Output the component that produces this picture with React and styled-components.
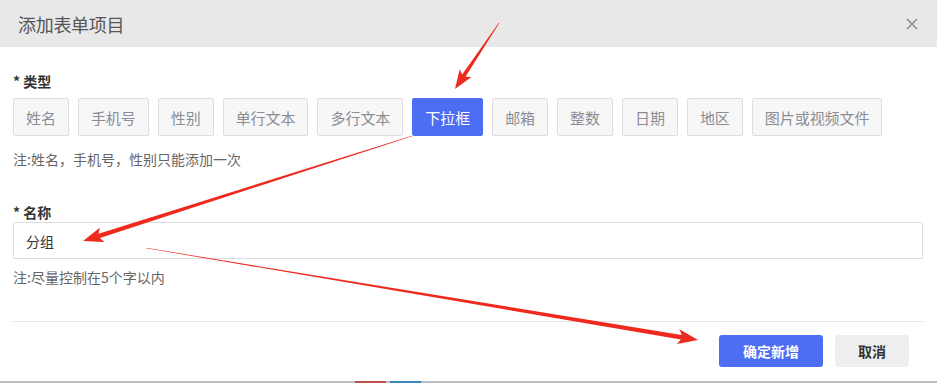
import React, { useState } from 'react';
import styled, { createGlobalStyle } from 'styled-components';

const Global = createGlobalStyle`
  html, body {
    margin: 0;
    padding: 0;
    background: #fff;
  }
  body {
    font-family: "Noto Sans CJK SC", "Noto Sans", "Liberation Sans", sans-serif;
    color: #333;
  }
`;

const Page = styled.div`
  position: relative;
  width: 937px;
  height: 383px;
  overflow: hidden;
`;

const Modal = styled.div`
  height: 381px;
  background: #fff;
  display: flex;
  flex-direction: column;
`;

const Header = styled.div`
  height: 47px;
  flex: none;
  background: #e8e8e8;
  display: flex;
  align-items: center;
  justify-content: space-between;
  padding: 0 18px 0 18px;
`;

const Title = styled.div`
  font-size: 18px;
  color: #555;
  letter-spacing: -0.3px;
`;

const Close = styled.button`
  border: 0;
  background: none;
  padding: 0;
  width: 14px;
  height: 14px;
  display: flex;
  align-items: center;
  justify-content: center;
  cursor: pointer;
`;

const Body = styled.div`
  padding: 24px 14px 0 13px;
  display: flex;
  flex-direction: column;
`;

const Label = styled.div`
  font-size: 14px;
  font-weight: 700;
  line-height: 20px;
  color: #333;
  margin-top: ${p => p.$top || 0}px;
`;

const Types = styled.div`
  display: flex;
  gap: 9px;
  margin-top: 7px;
`;

const TypeButton = styled.button`
  height: 38px;
  padding: 0 12px;
  font-family: inherit;
  font-size: 15px;
  letter-spacing: -0.05px;
  border-radius: 2px;
  border: 1px solid ${p => (p.$active ? '#4d6ef2' : '#dedcdf')};
  background: ${p => (p.$active ? '#4d6ef2' : '#f7f7f8')};
  color: ${p => (p.$active ? '#fff' : '#8a8d94')};
  cursor: pointer;
`;

const Note = styled.div`
  font-size: 14px;
  line-height: 20px;
  color: #666;
  margin-top: ${p => p.$top}px;
`;

const Input = styled.input`
  height: 37px;
  box-sizing: border-box;
  border: 1px solid #dcdcdf;
  border-radius: 2px;
  padding: 0 12px;
  font-family: inherit;
  font-size: 14px;
  color: #333;
  outline: none;
`;

const Divider = styled.div`
  height: 1px;
  background: #e4e4e4;
  margin: 34px 0 0;
`;

const Footer = styled.div`
  display: flex;
  justify-content: flex-end;
  gap: 12px;
  margin-top: 13px;
  padding-right: 28px;
`;

const FooterButton = styled.button`
  height: 32px;
  width: ${p => p.$w}px;
  border: 0;
  border-radius: 3px;
  font-family: inherit;
  font-size: 14px;
  font-weight: 700;
  background: ${p => (p.$primary ? '#4d6ef2' : '#eceef0')};
  color: ${p => (p.$primary ? '#fff' : '#333')};
  cursor: pointer;
`;

const Backdrop = styled.div`
  height: 2px;
  background: #bdbdbd;
  display: flex;
`;

const Chip = styled.div`
  width: ${p => p.$w}px;
  margin-left: ${p => p.$left}px;
  background: ${p => p.$color};
`;

const Overlay = styled.svg`
  position: absolute;
  left: 0;
  top: 0;
  pointer-events: none;
`;

const types = ['姓名', '手机号', '性别', '单行文本', '多行文本', '下拉框', '邮箱', '整数', '日期', '地区', '图片或视频文件'];

// tapered red annotation arrow from (x1,y1) to tip (x2,y2)
function arrowPoints(x1, y1, x2, y2, w0, w1, headLen, headW) {
  const dx = x2 - x1;
  const dy = y2 - y1;
  const len = Math.hypot(dx, dy);
  const ux = dx / len;
  const uy = dy / len;
  const nx = -uy;
  const ny = ux;
  const bx = x2 - ux * headLen;
  const by = y2 - uy * headLen;
  const pts = [
    [x1 + nx * w0 / 2, y1 + ny * w0 / 2],
    [bx + nx * w1 / 2 + ux * 3, by + ny * w1 / 2 + uy * 3],
    [bx + nx * headW / 2, by + ny * headW / 2],
    [x2, y2],
    [bx - nx * headW / 2, by - ny * headW / 2],
    [bx - nx * w1 / 2 + ux * 3, by - ny * w1 / 2 + uy * 3],
    [x1 - nx * w0 / 2, y1 - ny * w0 / 2],
  ];
  return pts.map(p => p.map(v => v.toFixed(1)).join(',')).join(' ');
}

const Arrows = () => (
  <Overlay width="937" height="383" viewBox="0 0 937 383">
    <polygon fill="#ee2a1f" points={arrowPoints(499, 23, 455, 89, 0.6, 4, 19, 14)} />
    <polygon fill="#ee2a1f" points={arrowPoints(412, 136, 83, 241, 0.4, 4.5, 20, 15)} />
    <polygon fill="#ee2a1f" points={arrowPoints(146, 248, 698, 340, 0.4, 4.5, 20, 15)} />
  </Overlay>
);

const App = () => {
  const [active, setActive] = useState('下拉框');
  const [name, setName] = useState('分组');

  return (
    <Page>
      <Global />
      <Modal>
        <Header>
          <Title>添加表单项目</Title>
          <Close aria-label="close">
            <svg width="12" height="12" viewBox="0 0 12 12">
              <path d="M1 1L11 11M11 1L1 11" stroke="#8a8a8a" strokeWidth="1.5" />
            </svg>
          </Close>
        </Header>
        <Body>
          <Label>* 类型</Label>
          <Types>
            {types.map(t => (
              <TypeButton key={t} $active={t === active} onClick={() => setActive(t)}>
                {t}
              </TypeButton>
            ))}
          </Types>
          <Note $top={13}>注:姓名，手机号，性别只能添加一次</Note>
          <Label $top={33}>* 名称</Label>
          <Input value={name} onChange={e => setName(e.target.value)} />
          <Note $top={8}>注:尽量控制在5个字以内</Note>
          <Divider />
        </Body>
        <Footer>
          <FooterButton $primary $w={104}>确定新增</FooterButton>
          <FooterButton $w={74}>取消</FooterButton>
        </Footer>
      </Modal>
      <Backdrop>
        <Chip $left={355} $w={31} $color="#c0504d" />
        <Chip $left={4} $w={31} $color="#3a87c0" />
      </Backdrop>
      <Arrows />
    </Page>
  );
};

export default App;
